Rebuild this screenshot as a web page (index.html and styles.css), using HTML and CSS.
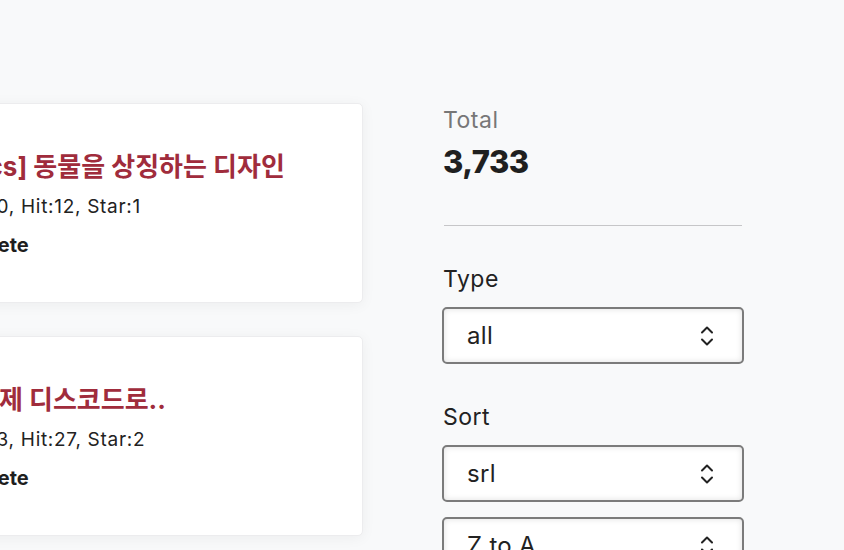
FILE: index.html
```html
<!DOCTYPE html>
<html lang="ko">
<head>
<meta charset="utf-8">
<link rel="stylesheet" href="styles.css">
</head>
<body>
<div class="page">
  <main class="list">
    <article class="card">
      <h2 class="card-title title-a">[Docs] 동물을 상징하는 디자인</h2>
      <p class="card-meta">Re:0, Hit:12, Star:1</p>
      <span class="card-action">Delete</span>
    </article>
    <article class="card">
      <h2 class="card-title title-b">이제 디스코드로..</h2>
      <p class="card-meta">Re:3, Hit:27, Star:2</p>
      <span class="card-action">Delete</span>
    </article>
  </main>
  <aside class="sidebar">
    <div class="total-label">Total</div>
    <div class="total-value">3,733</div>
    <hr class="divider">
    <div class="field-label">Type</div>
    <div class="select">
      <span>all</span>
      <svg class="chev" width="14" height="22" viewBox="0 0 14 22"><path d="M2 7.5 L7 2.5 L12 7.5 M2 14.5 L7 19.5 L12 14.5" fill="none" stroke="#222" stroke-width="2" stroke-linecap="round" stroke-linejoin="round"/></svg>
    </div>
    <div class="field-label sort-label">Sort</div>
    <div class="select">
      <span>srl</span>
      <svg class="chev" width="14" height="22" viewBox="0 0 14 22"><path d="M2 7.5 L7 2.5 L12 7.5 M2 14.5 L7 19.5 L12 14.5" fill="none" stroke="#222" stroke-width="2" stroke-linecap="round" stroke-linejoin="round"/></svg>
    </div>
    <div class="select">
      <span>Z to A</span>
      <svg class="chev" width="14" height="22" viewBox="0 0 14 22"><path d="M2 7.5 L7 2.5 L12 7.5 M2 14.5 L7 19.5 L12 14.5" fill="none" stroke="#222" stroke-width="2" stroke-linecap="round" stroke-linejoin="round"/></svg>
    </div>
  </aside>
</div>
</body>
</html>
```
FILE: styles.css
```css
html, body {
  margin: 0;
  padding: 0;
  height: 100%;
  overflow: hidden;
}
body {
  background: #f8f9fa;
  font-family: Inter, "Noto Sans CJK KR", sans-serif;
  color: #222;
}
.page {
  display: flex;
  align-items: flex-start;
  padding-top: 103px;
}
.list {
  flex: none;
  width: 440px;
  margin-left: -77px;
  display: flex;
  flex-direction: column;
  gap: 33px;
}
.card {
  box-sizing: border-box;
  height: 200px;
  background: #fff;
  border: 1px solid #ececee;
  border-radius: 5px;
  box-shadow: 0 2px 14px rgba(0, 0, 0, 0.05);
  padding: 48px 42px 0;
}
.card-title {
  margin: 0;
  font-size: 26px;
  line-height: 30px;
  font-weight: 700;
  color: #a02c3c;
  white-space: nowrap;
}
.title-a {
  text-indent: -23px;
}
.title-b {
  text-indent: 9px;
}
.card-meta {
  margin: 13px 0 0;
  font-size: 19px;
  line-height: 24px;
  letter-spacing: 0.7px;
  color: #222;
}
.card-action {
  display: block;
  margin-top: 13px;
  font-size: 20px;
  line-height: 26px;
  font-weight: 700;
  color: #1e1e1e;
}
.sidebar {
  flex: none;
  width: 302px;
  margin-left: 79px;
  padding-top: 4px;
}
.total-label {
  padding-left: 1px;
  font-size: 23px;
  line-height: 26px;
  letter-spacing: 0.5px;
  color: #777;
}
.total-value {
  margin-top: 11px;
  padding-left: 1px;
  font-size: 31px;
  line-height: 36px;
  font-weight: 800;
  letter-spacing: -0.5px;
  color: #1f1f1f;
}
.divider {
  margin: 45px 0 0 2px;
  width: 298px;
  border: 0;
  border-top: 1px solid #c6c6c8;
}
.field-label {
  margin-top: 40px;
  padding-left: 1px;
  font-size: 23px;
  line-height: 26px;
  letter-spacing: 0.5px;
  color: #222;
}
.sort-label {
  margin-top: 40px;
}
.select {
  box-sizing: border-box;
  height: 57px;
  margin-top: 15px;
  display: flex;
  align-items: center;
  justify-content: space-between;
  padding: 0 28px 0 23px;
  background: #fff;
  border: 2px solid #7b7b7b;
  border-radius: 5px;
  box-shadow: inset 0 0 6px rgba(0, 0, 0, 0.12);
  font-size: 24px;
  letter-spacing: 0.3px;
  color: #222;
}
.chev {
  display: block;
}
```
